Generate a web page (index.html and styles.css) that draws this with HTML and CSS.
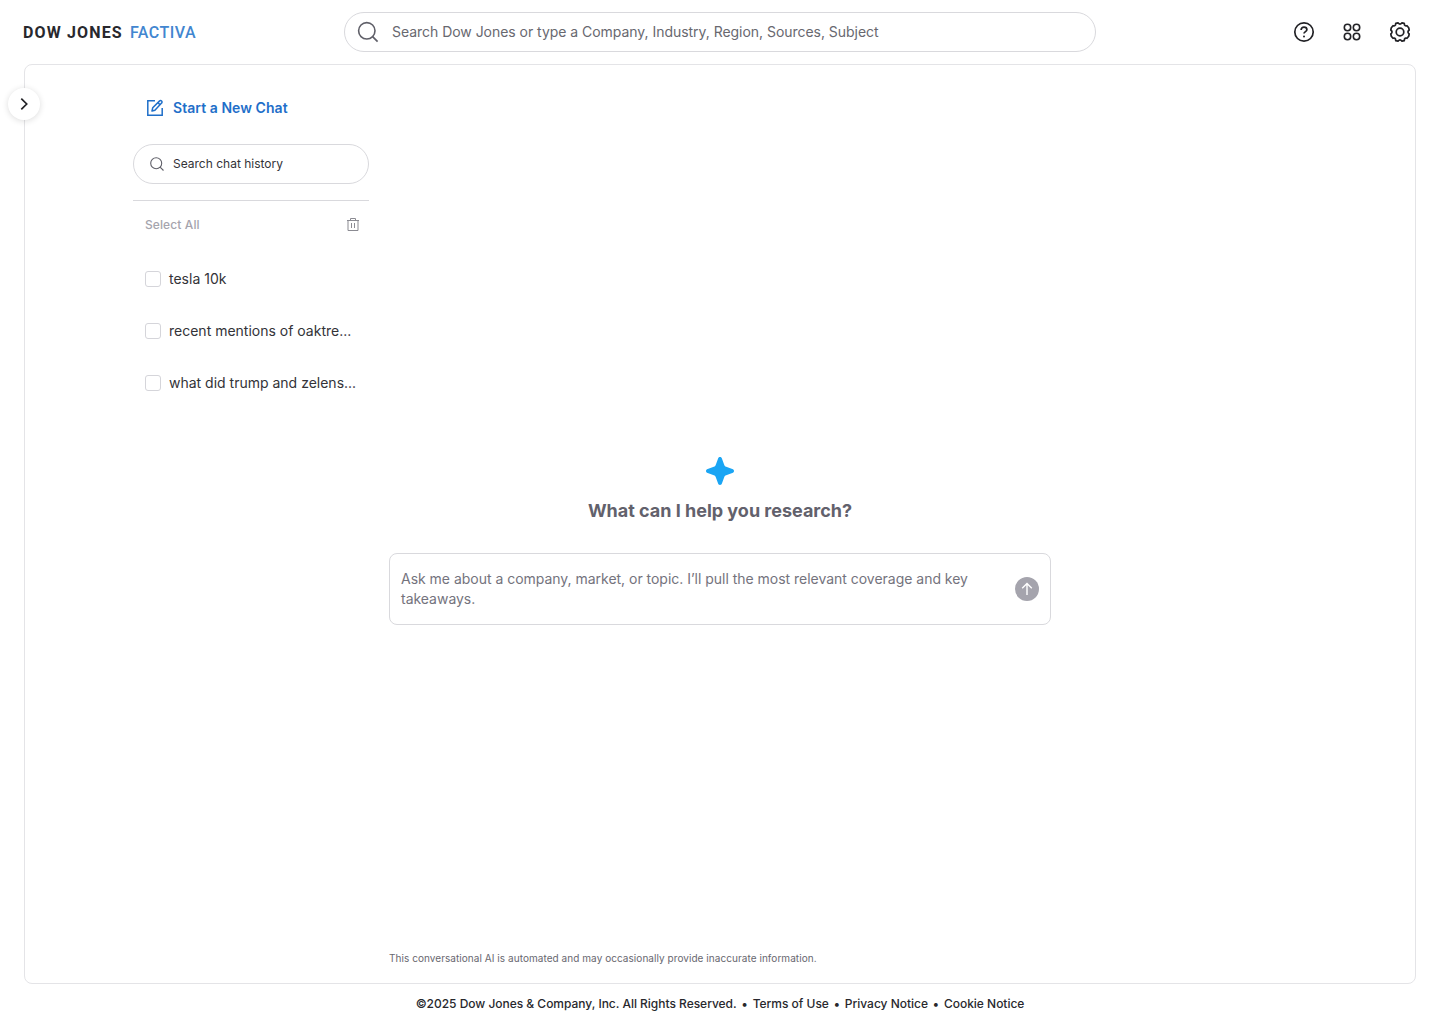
FILE: index.html
```html
<!DOCTYPE html>
<html lang="en">
<head>
<meta charset="utf-8">
<title>Dow Jones Factiva</title>
<link rel="stylesheet" href="styles.css">
</head>
<body>
<header class="topbar">
  <a class="logo"><span class="logo-main">DOW JONES</span><span class="logo-sub">FACTIVA</span></a>
  <div class="search">
    <svg width="24" height="24" viewBox="0 0 24 24" fill="none" stroke="#5f5f68" stroke-width="1.6"><circle cx="10.8" cy="10.8" r="8.2"/><path d="M16.6 16.6L21.6 21.6"/></svg>
    <span>Search Dow Jones or type a Company, Industry, Region, Sources, Subject</span>
  </div>
  <nav class="tools">
    <svg width="24" height="24" viewBox="0 0 24 24" fill="none" stroke="#222226" stroke-width="1.7"><circle cx="12" cy="12" r="9.2"/><path d="M9.1 9.9C9.1 8.1 10.3 7.2 12 7.2s2.9 1 2.9 2.500c0 1.900-2.900 1.900-2.900 3.900"/><circle cx="12" cy="16.400" r="1" fill="#222226" stroke="none"/></svg>
    <svg width="24" height="24" viewBox="0 0 24 24" fill="none" stroke="#222226" stroke-width="1.6"><circle cx="7.500" cy="7.500" r="3.200"/><circle cx="16.500" cy="7.500" r="3.200"/><circle cx="7.500" cy="16.500" r="3.200"/><circle cx="16.500" cy="16.500" r="3.200"/></svg>
    <svg width="24" height="24" viewBox="0 0 24 24" fill="none" stroke="#222226" stroke-width="1.7" stroke-linejoin="round"><circle cx="12" cy="12" r="3.800"/><path d="M7.800 3.300L10 2.800Q12 5.300 14 2.800L16.200 3.300L16.600 5.200Q17.200 6.300 19 5.700L20.700 7.800L21.200 10Q18.700 12 21.200 14L20.700 16.200L19 18.300Q17.200 17.700 16.600 18.800L16.200 20.700L14 21.200Q12 18.700 10 21.200L7.800 20.700L7.400 18.800Q6.800 17.700 5 18.300L3.300 16.200L2.800 14Q5.300 12 2.800 10L3.300 7.800L5 5.700Q6.800 6.300 7.400 5.200Z"/></svg>
  </nav>
</header>
<main class="panel">
  <button class="expand" aria-label="Expand"><svg width="16" height="16" viewBox="0 0 16 16" fill="none" stroke="#222226" stroke-width="1.7"><path d="M5.300 2.700L10.700 8L5.300 13.300"/></svg></button>
  <aside class="sidebar">
    <a class="new-chat"><svg width="20" height="20" viewBox="0 0 20 20" fill="none" stroke="#1f6fc9" stroke-width="1.500"><path d="M10 2.800H2.800V17.200H17.200V10"/><path d="M7 13l.7-3.200 6.700-6.700c.8-.8 1.600-.7 2.200-.1s.6 1.500 0 2.100L9.900 12.200z" stroke-linejoin="round"/><path d="M13 4.700l2.200 2.200"/></svg><span>Start a New Chat</span></a>
    <div class="history-search"><svg width="16" height="16" viewBox="0 0 16 16" fill="none" stroke="#5f5f68" stroke-width="1.100"><circle cx="7.200" cy="7.200" r="5.500"/><path d="M11.100 11.100L14.500 14.500"/></svg><span>Search chat history</span></div>
    <div class="select-row"><span>Select All</span><svg width="16" height="16" viewBox="0 0 16 16" fill="none" stroke="#8b8b92" stroke-width="1"><path d="M2 3.500H14M5.500 3.500V1.500H10.500V3.500M3 3.500V13.500H13V3.500M6.500 6V11M9.500 6V11"/></svg></div>
    <ul class="history">
      <li><i class="box"></i><span>tesla 10k</span></li>
      <li><i class="box"></i><span>recent mentions of oaktre...</span></li>
      <li><i class="box"></i><span>what did trump and zelens...</span></li>
    </ul>
  </aside>
  <section class="chat">
    <div class="welcome">
      <svg width="32" height="32" viewBox="0 0 32 32" fill="#1aa5f4"><path d="M16 2C17.100 2 17.700 2.700 18 3.700L20.200 9.800C20.600 11 21 11.400 22.200 11.800L28.300 14C29.300 14.300 30 15 30 16S29.300 17.700 28.300 18L22.200 20.200C21 20.600 20.600 21 20.200 22.200L18 28.300C17.700 29.300 17.100 30 16 30S14.300 29.300 14 28.300L11.800 22.200C11.400 21 11 20.600 9.800 20.200L3.700 18C2.700 17.700 2 17 2 16S2.700 14.300 3.700 14L9.800 11.800C11 11.400 11.400 11 11.800 9.800L14 3.700C14.300 2.700 14.900 2 16 2Z"/></svg>
      <h1>What can I help you research?</h1>
      <div class="prompt">
        <p>Ask me about a company, market, or topic. I’ll pull the most relevant coverage and key takeaways.</p>
        <svg width="24" height="24" viewBox="0 0 24 24" fill="none" stroke="#fff" stroke-width="1.400"><circle cx="12" cy="12" r="12" fill="#a5a4ad" stroke="none"/><path d="M12 18V6.800M7.200 11.200L12 6.500L16.800 11.200"/></svg>
      </div>
    </div>
    <p class="notice">This conversational AI is automated and may occasionally provide inaccurate information.</p>
  </section>
</main>
<footer class="footer"><span>©2025 Dow Jones &amp; Company, Inc. All Rights Reserved.</span><b>•</b><a>Terms of Use</a><b>•</b><a>Privacy Notice</a><b>•</b><a>Cookie Notice</a></footer>
</body>
</html>
```
FILE: styles.css
```css
* { box-sizing: border-box; }
body { margin: 0; height: 1024px; display: flex; flex-direction: column; background: #fff; color: #333338; font-family: Inter, "Liberation Sans", sans-serif; font-size: 14px; line-height: 20px; }
svg { display: block; flex: none; }
p, h1, ul { margin: 0; padding: 0; }
.topbar { height: 64px; flex: none; padding: 0 28px 0 23px; display: grid; grid-template-columns: 321px 752px 1fr; align-items: center; }
.logo { display: flex; gap: 7px; padding-top: 1px; font-family: Roboto, sans-serif; font-size: 16px; line-height: 21px; }
.logo-main { font-weight: 700; letter-spacing: 1.15px; color: #28282d; }
.logo-sub { font-weight: 500; letter-spacing: .5px; color: #4286d0; }
.search { height: 40px; display: flex; align-items: center; gap: 12px; padding: 0 11px; border: 1px solid #d9d9dd; border-radius: 20px; color: #68686f; letter-spacing: -.035px; }
.tools { display: flex; gap: 24px; justify-content: flex-end; }
.panel { position: relative; height: 920px; flex: none; margin: 0 24px; padding-left: 108px; border: 1px solid #e4e4e7; border-radius: 8px; display: flex; gap: 20px; }
.expand { position: absolute; left: -17px; top: 23px; width: 32px; height: 32px; padding: 0; border: 0; border-radius: 50%; background: #fff; box-shadow: 0 1px 6px rgba(0, 0, 0, .14); display: grid; place-items: center; }
.sidebar { width: 236px; padding-top: 31px; }
.new-chat { height: 24px; padding-left: 12px; display: flex; align-items: center; gap: 8px; color: #1f6fc9; font-weight: 600; letter-spacing: .05px; }
.history-search { margin-top: 24px; height: 40px; display: flex; align-items: center; gap: 8px; padding: 0 15px; border: 1px solid #d9d9dd; border-radius: 20px; font-size: 12px; line-height: 16px; }
.select-row { margin-top: 16px; border-top: 1px solid #d9d9dd; height: 48px; padding: 0 8px 0 12px; display: flex; justify-content: space-between; align-items: center; font-size: 12px; line-height: 17px; font-weight: 500; letter-spacing: .1px; color: #a5a4ad; }
.history { list-style: none; padding-top: 5px; }
.history li { height: 52px; padding-left: 12px; display: flex; align-items: center; gap: 8px; white-space: nowrap; }
.box { width: 16px; height: 16px; border: 1px solid #d5d5da; border-radius: 3px; }
.chat { width: 662px; display: flex; flex-direction: column; justify-content: space-between; padding: 390px 0 17px; }
.welcome { display: flex; flex-direction: column; align-items: center; }
h1 { margin-top: 12px; font-size: 18px; line-height: 24px; font-weight: 700; letter-spacing: -.01px; color: #62616c; }
.prompt { margin-top: 30px; width: 662px; height: 72px; padding: 0 11px; display: flex; align-items: center; justify-content: space-between; border: 1px solid #d9d9dd; border-radius: 8px; }
.prompt p { width: 590px; letter-spacing: -.02px; color: #74737d; }
.notice { font-size: 10px; line-height: 16px; letter-spacing: .055px; color: #68676f; }
.footer { height: 40px; display: flex; align-items: center; justify-content: center; font-size: 12px; line-height: 16px; font-weight: 500; letter-spacing: -.02px; color: #28282d; }
.footer b { width: 16px; text-align: center; }
```
